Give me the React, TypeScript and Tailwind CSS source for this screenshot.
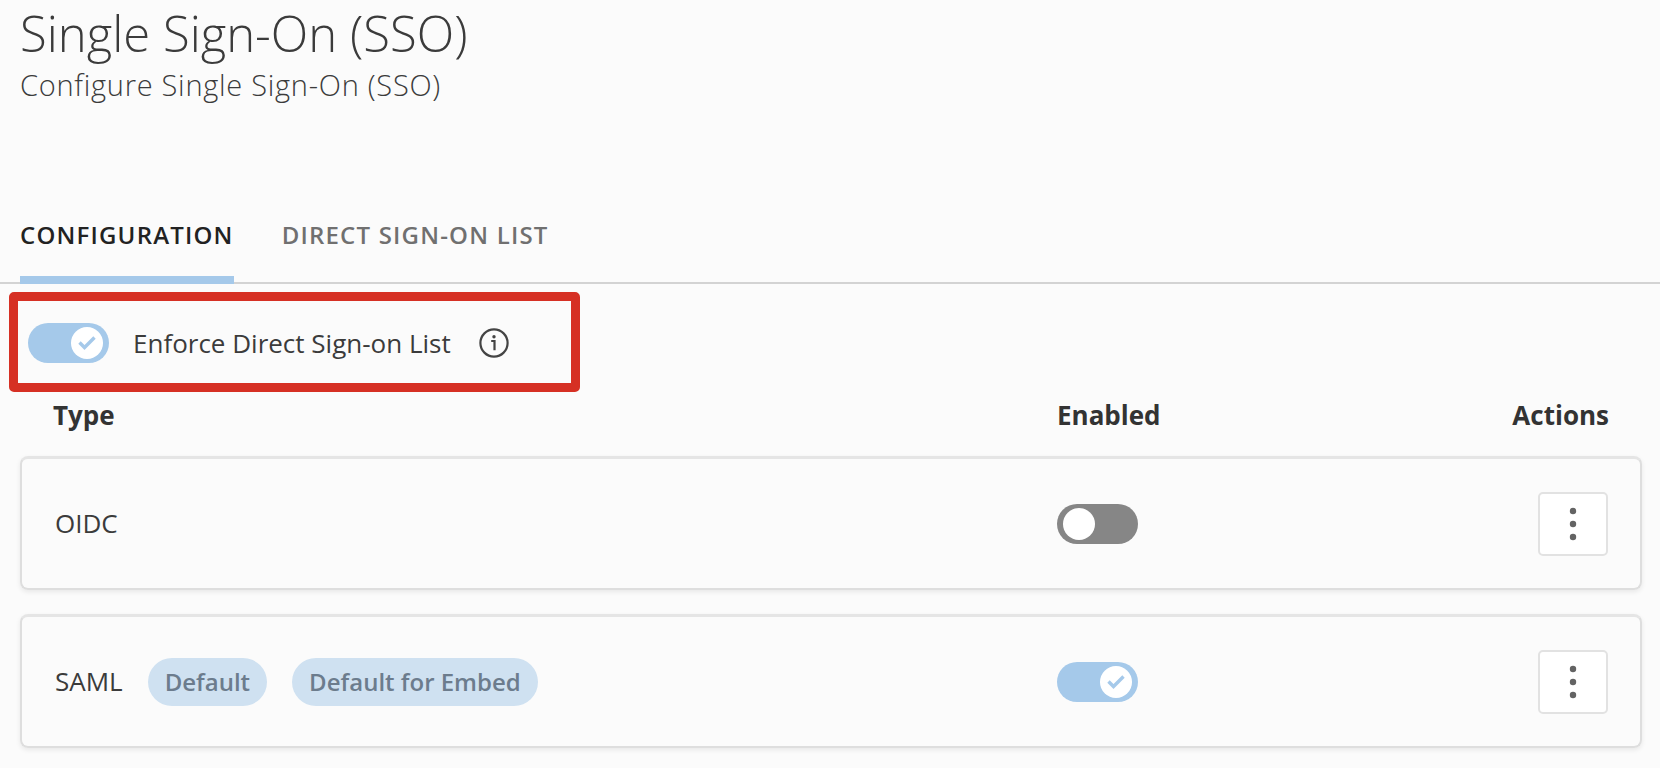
import { useState } from "react";

type SignOnType = {
  name: string;
  enabled: boolean;
  badges: string[];
};

const signOnTypes: SignOnType[] = [
  { name: "OIDC", enabled: false, badges: [] },
  { name: "SAML", enabled: true, badges: ["Default", "Default for Embed"] },
];

function Toggle({ id, label, initial }: { id: string; label?: string; initial: boolean }) {
  const [on, setOn] = useState(initial);
  return (
    <span className="relative inline-flex h-10 w-[81px] shrink-0 align-middle">
      <input
        id={id}
        type="checkbox"
        aria-label={label}
        checked={on}
        onChange={(e) => setOn(e.target.checked)}
        className="peer h-10 w-full cursor-pointer appearance-none rounded-full bg-[#868686] checked:bg-[#a5c9ea]"
      />
      <span className="pointer-events-none absolute top-1 left-1.5 flex size-8 items-center justify-center rounded-full bg-white peer-checked:left-[43px]">
        {on && (
          <svg viewBox="0 0 20 16" className="h-4 w-5" fill="none" stroke="#a5c9ea" strokeWidth="3.4">
            <path d="M2.5 7.5 L7.5 12.5 L17.5 2.5" />
          </svg>
        )}
      </span>
    </span>
  );
}

function InfoIcon() {
  return (
    <svg viewBox="0 0 30 30" className="size-[30px]" fill="none" stroke="#444" strokeWidth="2.2">
      <circle cx="15" cy="15" r="13.6" />
      <path d="M12.2 13h3.3v9.2" />
      <circle cx="15" cy="8.8" r="1.7" fill="#444" stroke="none" />
    </svg>
  );
}

function KebabIcon() {
  return (
    <svg viewBox="0 0 8 34" className="h-[34px] w-2" fill="#636363">
      <circle cx="4" cy="4" r="3.2" />
      <circle cx="4" cy="17" r="3.2" />
      <circle cx="4" cy="30" r="3.2" />
    </svg>
  );
}

export default function App() {
  return (
    <main className="min-h-screen bg-[#fbfbfb] pb-5 font-['Open_Sans','Noto_Sans',sans-serif] text-[#3b3b3b]">
      <header className="px-5 pt-[3px]">
        <h1 className="text-[49px] leading-[60px] font-light">Single Sign-On (SSO)</h1>
        <p className="text-[29px] leading-[44px] font-light tracking-wide">Configure Single Sign-On (SSO)</p>
      </header>

      <nav className="mt-[95px] flex gap-12 px-5 shadow-[inset_0_-2px_0_#d3d3d3]">
        <a
          href="#configuration"
          className="border-b-8 border-[#a5c9ea] pt-3 pb-5 text-[24px] leading-[42px] font-semibold tracking-wider text-[#222]"
        >
          CONFIGURATION
        </a>
        <a
          href="#direct-sign-on-list"
          className="border-b-8 border-transparent pt-3 pb-5 text-[24px] leading-[42px] font-semibold tracking-wider text-[#707070]"
        >
          DIRECT SIGN-ON LIST
        </a>
      </nav>

      <section className="mt-2 ml-[9px] flex h-[100px] w-[571px] items-center rounded-[5px] border-[9px] border-[#d63024] px-2.5 pt-0.5">
        <Toggle id="enforce" initial={true} />
        <label htmlFor="enforce" className="ml-6 text-[26px] whitespace-nowrap">
          Enforce Direct Sign-on List
        </label>
        <button type="button" aria-label="More information" className="ml-7">
          <InfoIcon />
        </button>
      </section>

      <div className="-mt-[18px] pr-[18px] pl-5">
        <table className="w-full border-separate border-spacing-x-0 border-spacing-y-6 text-left">
          <thead>
            <tr className="h-[34px] text-[26px] leading-[34px] font-bold text-[#333]">
              <th className="pl-[33px]">Type</th>
              <th className="w-[455px]">Enabled</th>
              <th className="w-[130px] pr-[33px] text-right">Actions</th>
            </tr>
          </thead>
          <tbody>
            {signOnTypes.map((row) => (
              <tr key={row.name} className="h-[134px] rounded-lg shadow-[0_2px_5px_rgba(0,0,0,0.08)]">
                <td className="rounded-l-lg border-t-3 border-b-2 border-l-2 border-[#dedede] border-t-[#e5e5e5] pl-[33px]">
                  <div className="flex items-center gap-[25px]">
                    <span className="text-[26px]">{row.name}</span>
                    {row.badges.map((badge) => (
                      <span
                        key={badge}
                        className="rounded-full bg-[#cfe1f1] px-[17px] text-[24px] leading-[48px] font-semibold text-[#6c7c8d]"
                      >
                        {badge}
                      </span>
                    ))}
                  </div>
                </td>
                <td className="border-t-3 border-b-2 border-[#dedede] border-t-[#e5e5e5]">
                  <Toggle id={`enabled-${row.name}`} label={`${row.name} enabled`} initial={row.enabled} />
                </td>
                <td className="rounded-r-lg border-t-3 border-r-2 border-b-2 border-[#dedede] border-t-[#e5e5e5] pr-8 text-right">
                  <button
                    type="button"
                    aria-label={`${row.name} actions`}
                    className="inline-flex h-16 w-[70px] items-center justify-center rounded-[5px] border-2 border-[#e2e2e2] bg-white align-middle"
                  >
                    <KebabIcon />
                  </button>
                </td>
              </tr>
            ))}
          </tbody>
        </table>
      </div>
    </main>
  );
}
